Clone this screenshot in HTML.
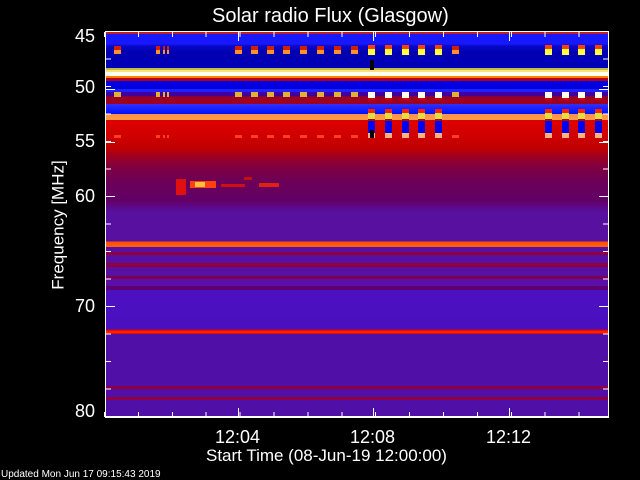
<!DOCTYPE html>
<html><head><meta charset="utf-8"><style>
*{margin:0;padding:0;box-sizing:border-box}
body{width:640px;height:480px;background:#000;position:relative;overflow:hidden;font-family:"Liberation Sans",sans-serif;color:#fff}
.t{position:absolute;white-space:nowrap;line-height:1;font-size:18px}
#plot{position:absolute;left:105px;top:31px;width:504px;height:387px;border:1px solid #fff;border-bottom:2px solid #fff;overflow:hidden;
background:linear-gradient(to bottom,
#c02020 0,#c02020 2px,#1818ff 2px,#1818ff 12px,#0808c8 14px,#0000b0 20px,#0000b8 36px,#c0c040 36px,#c0c040 38px,#ffe080 38px,#ffe080 40px,#fffff0 40px,#fffff0 44px,#ff8000 44px,#ff8000 46px,#c00010 46px,#a00030 49px,#0000e0 49px,#0000e0 57px,#2020ff 57px,#2020ff 60px,#4000a0 60px,#4000a0 64px,#800040 64px,#a00020 67px,#a00020 72px,#3030ff 72px,#0010ff 82px,#ff9050 82px,#ffa040 88px,#e00000 88px,#d00000 104px,#c00000 116px,#a00020 124px,#800040 135px,#6c0058 150px,#620068 169px,#5810a0 180px,#5810a0 209px,#ff5000 210px,#ff6010 215px,#5810a0 215px,#5810a0 220px,#900040 220px,#900040 223px,#5810a0 223px,#5810a0 231px,#900040 231px,#900040 235px,#5810a0 235px,#5810a0 244px,#800050 244px,#800050 247px,#5a10a8 247px,#5a10a8 254px,#600070 254px,#600070 258px,#4c10c0 258px,#4a10c0 297px,#e00000 298px,#ff3000 300px,#e00000 302px,#5010a8 302px,#5010a8 354px,#900040 354px,#900040 357px,#5010a8 357px,#5010a8 365px,#900040 365px,#900040 368px,#5010a8 368px)}
.c{position:absolute;top:9px;width:7px;height:100px}
.n{background:linear-gradient(to bottom,transparent 5px,#d02000 5px,#d02000 9px,#ff9030 9px,#ff9030 13px,transparent 13px,transparent 51px,#e0b030 51px,#e0b030 56px,transparent 56px,transparent 94px,#ff4020 94px,#ff4020 97px,transparent 97px)}
.b{background:linear-gradient(to bottom,transparent 4px,#ff4000 4px,#ff4000 8px,#ffff40 8px,#ffff40 14px,#0000c0 14px,#0000c0 20px,transparent 20px,transparent 51px,#fffff0 51px,#fffff0 57px,#d00000 57px,#d00000 59px,transparent 59px,transparent 68px,#ff2000 68px,#ff2000 72px,#e0e040 72px,#e0e040 78px,#c00000 78px,#c00000 80px,#0000f0 80px,#0000f0 92px,#ffb080 92px,#ffb080 97px,transparent 97px)}
.r{position:absolute}
.xt{position:absolute;left:104px;width:505px;height:5px;background:repeating-linear-gradient(to right,#fff 0,#fff 1px,transparent 1px,transparent 33.9px)}
.yt{position:absolute;top:31px;width:6px;height:387px;background:repeating-linear-gradient(to bottom,#fff 0,#fff 1px,transparent 1px,transparent 27.5px)}
.mx{position:absolute;width:1px;height:9px;background:#fff}
.my{position:absolute;width:10px;height:1px;background:#fff}
</style></head><body>
<div class="t" style="left:212px;top:6px;font-size:20px">Solar radio Flux (Glasgow)</div>
<div id="plot">
<div class="c n" style="left:8px"></div>
<div class="c n" style="left:50px;width:4px"></div>
<div class="c n" style="left:57px;width:2px"></div>
<div class="c n" style="left:61px;width:2px"></div>
<div class="c n" style="left:129px"></div>
<div class="c n" style="left:145px"></div>
<div class="c n" style="left:161px"></div>
<div class="c n" style="left:177px"></div>
<div class="c n" style="left:194px"></div>
<div class="c n" style="left:211px"></div>
<div class="c n" style="left:228px"></div>
<div class="c n" style="left:245px"></div>
<div class="c b" style="left:262px"></div>
<div class="r" style="left:264px;top:28px;width:4px;height:10px;background:#000"></div>
<div class="r" style="left:264px;top:98px;width:4px;height:8px;background:#000"></div>
<div class="c b" style="left:279px"></div>
<div class="c b" style="left:296px"></div>
<div class="c b" style="left:312px"></div>
<div class="c b" style="left:329px"></div>
<div class="c n" style="left:346px"></div>
<div class="c b" style="left:439px"></div>
<div class="c b" style="left:456px"></div>
<div class="c b" style="left:472px"></div>
<div class="c b" style="left:489px"></div>
<div class="r" style="left:70px;top:147px;width:10px;height:16px;background:#e01010"></div>
<div class="r" style="left:84px;top:149px;width:26px;height:7px;background:#ff4010"></div>
<div class="r" style="left:89px;top:150px;width:10px;height:5px;background:#ffc040"></div>
<div class="r" style="left:115px;top:152px;width:24px;height:3px;background:#d01010"></div>
<div class="r" style="left:138px;top:145px;width:8px;height:3px;background:#c01010"></div>
<div class="r" style="left:153px;top:151px;width:20px;height:4px;background:#e02010"></div>
</div>
<div class="xt" style="top:412px"></div>
<div class="xt" style="top:32px"></div>
<div class="yt" style="left:105px"></div>
<div class="yt" style="left:603px"></div>
<div class="mx" style="left:238px;top:408px"></div>
<div class="mx" style="left:373px;top:408px"></div>
<div class="mx" style="left:509px;top:408px"></div>
<div class="mx" style="left:238px;top:32px"></div>
<div class="mx" style="left:373px;top:32px"></div>
<div class="mx" style="left:509px;top:32px"></div>
<div class="my" style="left:105px;top:89px"></div>
<div class="my" style="left:105px;top:142px"></div>
<div class="my" style="left:105px;top:196px"></div>
<div class="my" style="left:105px;top:306px"></div>
<div class="my" style="left:599px;top:89px"></div>
<div class="my" style="left:599px;top:142px"></div>
<div class="my" style="left:599px;top:196px"></div>
<div class="my" style="left:599px;top:306px"></div>
<div class="t" style="left:75px;top:27px">45</div>
<div class="t" style="left:75px;top:78px">50</div>
<div class="t" style="left:75px;top:132px">55</div>
<div class="t" style="left:75px;top:187px">60</div>
<div class="t" style="left:75px;top:297px">70</div>
<div class="t" style="left:75px;top:402px">80</div>
<div class="t" style="top:225px;left:58px;font-size:17px;transform:translate(-50%,-50%) rotate(-90deg)">Frequency [MHz]</div>
<div class="t" style="left:215px;top:428px">12:04</div>
<div class="t" style="left:350px;top:428px">12:08</div>
<div class="t" style="left:486px;top:428px">12:12</div>
<div class="t" style="left:206px;top:447px;font-size:17px">Start Time (08-Jun-19 12:00:00)</div>
<div class="t" style="left:1px;top:470px;font-size:10px">Updated Mon Jun 17 09:15:43 2019</div>
</body></html>
